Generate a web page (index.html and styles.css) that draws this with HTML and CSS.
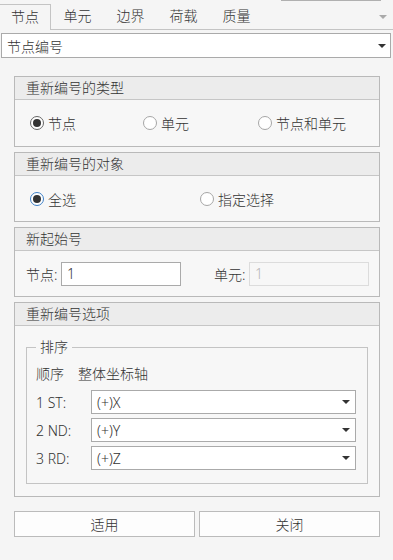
FILE: index.html
```html
<!DOCTYPE html>
<html lang="zh">
<head>
    <meta charset="UTF-8">
    <meta name="viewport" content="width=device-width, initial-scale=1.0">
    <title>节点编号</title>
    <link rel="stylesheet" href="styles.css">
</head>

<body>
    <div class="tabs">
        <div class="tab active">节点</div>
        <div class="tab">单元</div>
        <div class="tab">边界</div>
        <div class="tab">荷载</div>
        <div class="tab">质量</div>
        <div class="tab-more"><span class="arrow light"></span></div>
        <div class="top-line"></div>
    </div>

    <div class="select main-select">
        <span>节点编号</span>
        <span class="arrow"></span>
    </div>

    <div class="panels">
        <div class="panel">
            <div class="panel-header">重新编号的类型</div>
            <div class="panel-body radios type-radios">
                <label class="radio"><span class="dot checked"></span>节点</label>
                <label class="radio"><span class="dot"></span>单元</label>
                <label class="radio"><span class="dot"></span>节点和单元</label>
            </div>
        </div>

        <div class="panel">
            <div class="panel-header">重新编号的对象</div>
            <div class="panel-body radios target-radios">
                <label class="radio"><span class="dot checked focus"></span>全选</label>
                <label class="radio"><span class="dot"></span>指定选择</label>
            </div>
        </div>

        <div class="panel">
            <div class="panel-header">新起始号</div>
            <div class="panel-body start-row">
                <div class="field">
                    <span class="field-label">节点:</span>
                    <div class="input">1</div>
                </div>
                <div class="field">
                    <span class="field-label">单元:</span>
                    <div class="input disabled">1</div>
                </div>
            </div>
        </div>

        <div class="panel">
            <div class="panel-header">重新编号选项</div>
            <div class="panel-body options">
                <fieldset class="group">
                    <legend>排序</legend>
                    <div class="order-title"><span>顺序</span><span>整体坐标轴</span></div>
                    <div class="order-row">
                        <span class="order-label">1 ST:</span>
                        <div class="select small"><span>(+)X</span><span class="arrow"></span></div>
                    </div>
                    <div class="order-row">
                        <span class="order-label">2 ND:</span>
                        <div class="select small"><span>(+)Y</span><span class="arrow"></span></div>
                    </div>
                    <div class="order-row">
                        <span class="order-label">3 RD:</span>
                        <div class="select small"><span>(+)Z</span><span class="arrow"></span></div>
                    </div>
                </fieldset>
            </div>
        </div>
    </div>

    <div class="buttons">
        <button class="btn">适用</button>
        <button class="btn">关闭</button>
    </div>
</body>
</html>
```

FILE: styles.css
```css
* {
    box-sizing: border-box;
}

body {
    font-family: "Noto Sans", "Noto Sans CJK SC", sans-serif;
    font-size: 14px;
    font-weight: 300;
    color: #333;
    margin: 0;
    background-color: #f5f5f5;
    width: 393px;
    height: 560px;
    overflow: hidden;
}

/* tab strip */
.tabs {
    position: relative;
    display: flex;
    align-items: flex-end;
    height: 30px;
    border-bottom: 1px solid #c4c4c4;
}

.tab {
    width: 53px;
    height: 25px;
    line-height: 24px;
    text-align: center;
}

.tab.active {
    width: 52px;
    height: 26px;
    margin-left: -1px;
    margin-bottom: -1px;
    background-color: #f5f5f5;
    border: 1px solid #c4c4c4;
    border-bottom: none;
}

.tab-more {
    margin-left: auto;
    width: 14px;
    height: 25px;
    display: flex;
    align-items: center;
}

.top-line {
    position: absolute;
    top: 0;
    left: 281px;
    width: 100px;
    height: 1px;
    background-color: #b0b0b0;
}

.arrow {
    width: 0;
    height: 0;
    border-left: 4px solid transparent;
    border-right: 4px solid transparent;
    border-top: 4px solid #333;
}

.arrow.light {
    border-top-color: #aaa;
}

/* combo boxes */
.select {
    display: flex;
    align-items: center;
    justify-content: space-between;
    background-color: #fff;
    border: 1px solid #aaa;
}

.main-select {
    height: 25px;
    margin: 3px 2px 0 1px;
    padding: 0 4px 0 5px;
}

.select.small {
    width: 265px;
    height: 24px;
    padding: 0 5px 0 5px;
}

/* group panels */
.panels {
    margin: 18px 13px 0 14px;
    display: flex;
    flex-direction: column;
    gap: 5px;
}

.panel {
    border: 1px solid #b9b9b9;
    background-color: #f7f7f7;
}

.panel-header {
    height: 23px;
    line-height: 22px;
    padding-left: 11px;
    background-color: #ececec;
    border-bottom: 1px solid #c6c6c6;
}

.panel-body {
    height: 45px;
}

.panel:first-child .panel-body {
    height: 46px;
}

.radios {
    display: grid;
    align-items: center;
    padding-left: 15px;
}

.type-radios {
    grid-template-columns: 113px 115px auto;
}

.target-radios {
    grid-template-columns: 170px auto;
    padding-top: 1px;
}

.radio {
    display: flex;
    align-items: center;
    gap: 4px;
}

.dot {
    width: 14px;
    height: 14px;
    border-radius: 50%;
    border: 1px solid #a6a6a6;
    background-color: #fff;
    display: flex;
    align-items: center;
    justify-content: center;
}

.dot.checked {
    border-color: #666;
}

.dot.checked::after {
    content: "";
    width: 8px;
    height: 8px;
    border-radius: 50%;
    background-color: #333;
}

.dot.focus {
    border-color: #3d7fc6;
}

.start-row {
    display: flex;
    align-items: center;
    padding-left: 11px;
}

.field {
    display: flex;
    align-items: center;
    gap: 1px;
}

.field-label {
    width: 34px;
}

.field + .field {
    margin-left: 33px;
}

.input {
    width: 120px;
    height: 24px;
    line-height: 22px;
    padding-left: 5px;
    background-color: #fff;
    border: 1px solid #aaa;
}

.input.disabled {
    background-color: #f7f7f7;
    border-color: #dcdcdc;
    color: #b5b5b5;
}

.options {
    height: auto;
    padding: 11px 11px 12px 11px;
}

.group {
    margin: 0;
    padding: 7px 11px 13px 9px;
    border: 1px solid #c4c4c4;
}

.group legend {
    padding: 0 4px;
    margin-left: 0;
    line-height: 20px;
}

.order-title {
    display: flex;
    gap: 14px;
    line-height: 20px;
    margin-bottom: 6px;
}

.order-row {
    display: flex;
    align-items: center;
    justify-content: space-between;
}

.order-row + .order-row {
    margin-top: 4px;
}

/* bottom buttons */
.buttons {
    display: flex;
    gap: 4px;
    margin: 14px 13px 0 14px;
}

.btn {
    flex: 1;
    height: 26px;
    font-family: inherit;
    font-size: 14px;
    font-weight: 300;
    color: #333;
    background-color: #fdfdfd;
    border: 1px solid #bbb;
    padding: 0;
}
```
